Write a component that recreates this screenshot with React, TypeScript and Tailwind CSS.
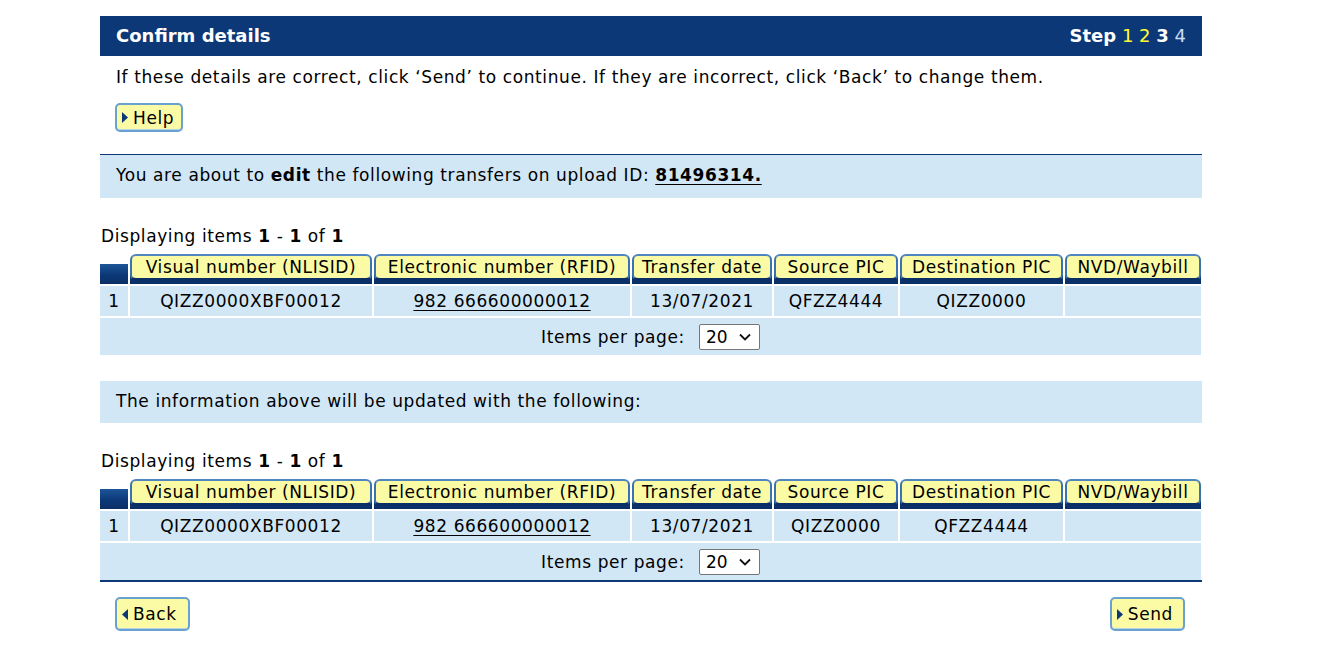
import React from "react";

const cols = "grid-cols-[28px_242px_256px_140px_124px_163px_136px]";

const headers = [
  "Visual number (NLISID)",
  "Electronic number (RFID)",
  "Transfer date",
  "Source PIC",
  "Destination PIC",
  "NVD/Waybill",
];

function Arrow({ dir }: { dir: "left" | "right" }) {
  return (
    <svg width="6" height="11" viewBox="0 0 6 11" className="shrink-0">
      {dir === "right" ? (
        <polygon points="0,0 6,5.5 0,11" fill="#0c3878" />
      ) : (
        <polygon points="6,0 0,5.5 6,11" fill="#0c3878" />
      )}
    </svg>
  );
}

function YellowButton({
  label,
  dir,
  className,
}: {
  label: string;
  dir: "left" | "right";
  className?: string;
}) {
  return (
    <button
      className={
        "flex items-center gap-[5px] rounded-[5px] border-2 border-[#6aa2cf] bg-[#fafba4] pl-[5px] text-black shadow-[inset_0_-1px_0_#b8d4ea] " +
        (className ?? "")
      }
    >
      <Arrow dir={dir} />
      <span>{label}</span>
    </button>
  );
}

function TransferTable({ source, dest }: { source: string; dest: string }) {
  const cells = ["QIZZ0000XBF00012", "982 666600000012", "13/07/2021", source, dest, ""];
  return (
    <div className={`grid ${cols} gap-[2px]`}>
      <div className="h-[31px] bg-[linear-gradient(to_bottom,white_0,white_11px,#1d5698_11px,#0c3878_22px,#0a2f66_100%)]" />
      {headers.map((h) => (
        <div
          key={h}
          className="h-[31px] bg-[linear-gradient(to_bottom,white_0,white_11px,#1d5698_11px,#0c3878_22px,#0a2f66_100%)] pt-[1px]"
        >
          <div className="flex h-[27px] items-center justify-center rounded-[6px] border-x-2 border-t-2 border-b-[3px] border-x-[#3a73b0] border-t-[#4f86bf] border-b-[#0a2f66] bg-[#fafba4] text-black">
            {h}
          </div>
        </div>
      ))}
      <div className="flex h-[30px] items-center justify-center bg-[#d1e7f6]">1</div>
      {cells.map((c, i) => (
        <div
          key={i}
          className={
            "flex h-[30px] items-center justify-center bg-[#d1e7f6] " +
            (i === 1 ? "underline underline-offset-[3px]" : "")
          }
        >
          {c}
        </div>
      ))}
      <div className="col-span-7 flex h-[37px] items-center justify-center gap-[14px] bg-[#d1e7f6]">
        <span>Items per page:</span>
        <div className="flex h-[26px] w-[61px] items-center justify-between rounded-[2px] border border-[#767676] bg-white pl-[6px] pr-[8px] tracking-normal">
          <span>20</span>
          <svg width="12" height="8" viewBox="0 0 12 8">
            <polyline points="1,1.5 6,6.5 11,1.5" fill="none" stroke="#111" strokeWidth="1.8" />
          </svg>
        </div>
      </div>
    </div>
  );
}

export default function App() {
  return (
    <div className="min-h-[648px] bg-white text-[17px] leading-5 tracking-[0.6px] text-black font-['DejaVu_Sans',Verdana,sans-serif]">
      <div className="ml-[100px] w-[1102px] pt-4">
        <div className="flex h-10 items-center justify-between bg-[#0c3878] px-4 text-[18px] tracking-normal text-white">
          <span className="font-bold">Confirm details</span>
          <span>
            <span className="font-bold">Step</span>{" "}
            <span className="text-[#ffff33]">1</span>{" "}
            <span className="text-[#ffff33]">2</span>{" "}
            <span className="font-bold">3</span>{" "}
            <span className="text-[#c9def2]">4</span>
          </span>
        </div>

        <p className="mt-[11px] pl-4">
          If these details are correct, click ‘Send’ to continue. If they are incorrect, click
          ‘Back’ to change them.
        </p>

        <div className="mt-[16px] pl-[15px]">
          <YellowButton label="Help" dir="right" className="h-[29px] pr-[7px]" />
        </div>

        <div className="mt-[22px] flex h-[44px] items-center border-t border-[#0c3878] bg-[#d1e7f6] pl-4">
          <span className="-mt-[3px]">
            You are about to <b>edit</b> the following transfers on upload ID:{" "}
            <b className="underline underline-offset-[3px]">81496314.</b>
          </span>
        </div>

        <p className="mt-[28px] pl-[1px]">
          Displaying items <b>1</b> - <b>1</b> of <b>1</b>
        </p>
        <div className="mt-[7px]">
          <TransferTable source="QFZZ4444" dest="QIZZ0000" />
        </div>

        <div className="mt-[26px] flex h-[42px] items-center bg-[#d1e7f6] pl-4">
          <span className="-mt-[3px]">The information above will be updated with the following:</span>
        </div>

        <p className="mt-[28px] pl-[1px]">
          Displaying items <b>1</b> - <b>1</b> of <b>1</b>
        </p>
        <div className="mt-[7px] border-b-2 border-[#0c3878]">
          <TransferTable source="QIZZ0000" dest="QFZZ4444" />
        </div>

        <div className="mt-[15px] flex justify-between px-[15px]">
          <YellowButton label="Back" dir="left" className="h-[34px] pr-[11px]" />
          <div className="pr-[2px]">
            <YellowButton label="Send" dir="right" className="h-[34px] pr-[10px]" />
          </div>
        </div>
      </div>
    </div>
  );
}
